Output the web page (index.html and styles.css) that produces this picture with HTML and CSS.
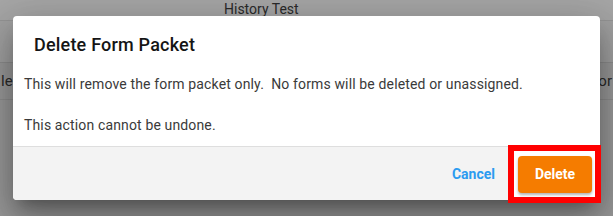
FILE: index.html
```html
<!DOCTYPE html>
<html lang="en">
<head>
    <meta charset="UTF-8">
    <title>Delete Form Packet</title>
    <link rel="stylesheet" href="styles.css">
</head>
<body>
    <div class="page">
        <div class="page-header">History Test</div>
        <div class="page-toolbar"></div>
        <div class="page-row">
            <span>le</span>
            <span>or</span>
        </div>
    </div>

    <div class="dialog">
        <h2 class="dialog-title">Delete Form Packet</h2>
        <div class="dialog-body">
            <p>This will remove the form packet only.&nbsp; No forms will be deleted or unassigned.</p>
            <p>This action cannot be undone.</p>
        </div>
        <div class="dialog-actions">
            <button class="btn-cancel">Cancel</button>
            <span class="highlight">
                <button class="btn-delete">Delete</button>
            </span>
        </div>
    </div>
</body>
</html>
```

FILE: styles.css
```css
body {
    margin: 0;
    font-family: Roboto, "Liberation Sans", sans-serif;
    background: #9a9a9a;
    height: 216px;
    overflow: hidden;
}

/* Dimmed page behind the dialog */
.page {
    color: #2a2a2a;
    font-size: 14px;
}

.page-header {
    height: 20px;
    line-height: 18px;
    background: #a6a6a6;
    border-bottom: 1px solid #959595;
    padding-left: 224px;
}

.page-toolbar {
    height: 41px;
    background: #a1a1a1;
    border-bottom: 1px solid #8e8e8e;
}

.page-row {
    display: flex;
    justify-content: space-between;
    height: 36px;
    line-height: 36px;
    font-size: 15px;
    padding: 0 1px 0 1px;
    border-bottom: 1px solid #8e8e8e;
}

/* Dialog */
.dialog {
    position: absolute;
    left: 13px;
    top: 16px;
    width: 587px;
    background: #fff;
    border-radius: 4px;
    box-shadow: 0 11px 15px -7px rgba(0, 0, 0, 0.3),
                0 24px 38px 3px rgba(0, 0, 0, 0.2),
                0 9px 46px 8px rgba(0, 0, 0, 0.15);
}

.dialog-title {
    margin: 0;
    padding: 17px 0 0 21px;
    font-size: 18px;
    line-height: 24px;
    font-weight: 500;
    letter-spacing: 0.2px;
    color: #151515;
}

.dialog-body {
    padding: 17px 11px 11px;
    font-size: 14px;
    line-height: 20px;
    letter-spacing: 0.14px;
    color: #3a3a3a;
}

.dialog-body p {
    margin: 0 0 21px;
}

.dialog-body p:last-child {
    margin-bottom: 0;
}

.dialog-actions {
    display: flex;
    justify-content: flex-end;
    align-items: center;
    height: 53px;
    background: #f3f3f3;
    border-top: 1px solid #dedede;
    border-radius: 0 0 4px 4px;
}

.btn-cancel {
    background: none;
    border: none;
    padding: 0;
    margin-right: 13px;
    font-family: inherit;
    font-size: 14px;
    font-weight: 700;
    color: #2c9bf0;
    cursor: pointer;
}

.highlight {
    display: flex;
    border: 6px solid #ff0000;
    background: #fff;
    padding: 5px 3px 4px 4px;
    margin-right: -1px;
}

.btn-delete {
    width: 74px;
    height: 37px;
    border: none;
    border-radius: 4px;
    background: #f57c00;
    color: #fff;
    font-family: inherit;
    font-size: 14px;
    font-weight: 700;
    box-shadow: 0 2px 3px rgba(0, 0, 0, 0.3);
    cursor: pointer;
}
```
